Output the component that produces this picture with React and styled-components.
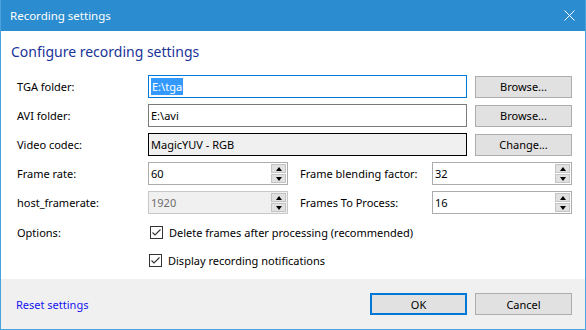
import React from 'react';
import styled, { createGlobalStyle } from 'styled-components';

const Global = createGlobalStyle`
  html, body { margin: 0; padding: 0; background: #fff; }
  body { font-family: "Noto Sans", "Open Sans", sans-serif; font-size: 11px; color: #000; }
`;

const Window = styled.div`
  width: 586px;
  height: 330px;
  box-sizing: border-box;
  border: 1px solid #4aa3df;
  border-top: none;
  display: flex;
  flex-direction: column;
  background: #fff;
`;

const TitleBar = styled.div`
  height: 31px;
  flex: none;
  background: #2b8dcf;
  color: #fff;
  display: flex;
  align-items: center;
  justify-content: space-between;
  padding: 0 10px 0 9px;
  font-size: 11.5px;
`;

const Body = styled.div`
  flex: 1;
  padding: 10px 13px 0 15px;
  display: flex;
  flex-direction: column;
`;

const Heading = styled.div`
  font-size: 14px;
  line-height: 20px;
  color: #1a3399;
  margin: 1px 0 13px -5px;
`;

const Row = styled.div`
  display: flex;
  align-items: center;
  height: 23px;
  margin-bottom: 6px;
  gap: 8px;
`;

const Label = styled.div`
  width: ${p => p.w || 123}px;
  flex: none;
  white-space: nowrap;
  padding-left: ${p => p.pl || 1}px;
`;

const Field = styled.div`
  flex: ${p => (p.w ? 'none' : 1)};
  width: ${p => (p.w ? p.w + 'px' : 'auto')};
  height: 23px;
  box-sizing: border-box;
  border: 1px solid ${p => p.border || '#7a7a7a'};
  background: ${p => p.bg || '#fff'};
  color: ${p => p.color || '#000'};
  display: flex;
  align-items: center;
  padding-left: 2px;
`;

const Selected = styled.span`
  background: #3399ff;
  color: #fff;
  padding: 1px 1px;
`;

const Button = styled.div`
  width: 97px;
  height: 22px;
  box-sizing: border-box;
  flex: none;
  background: #e1e1e1;
  border: ${p => (p.primary ? '2px solid #0078d7' : '1px solid #adadad')};
  display: flex;
  align-items: center;
  justify-content: center;
`;

const SpinField = styled(Field)`
  padding-right: 1px;
  justify-content: space-between;
`;

const Spinner = styled.div`
  display: flex;
  flex-direction: column;
  width: 15px;
  height: 19px;
`;

const SpinBtn = styled.div`
  flex: 1;
  background: #e1e1e1;
  border: 1px solid #c4c4c4;
  box-sizing: border-box;
  display: flex;
  align-items: center;
  justify-content: center;
  & + & { margin-top: 1px; }
`;

const Arrow = styled.div`
  width: 0;
  height: 0;
  border-left: 3.5px solid transparent;
  border-right: 3.5px solid transparent;
  ${p => (p.down ? 'border-top: 4px solid #000;' : 'border-bottom: 4px solid #000;')}
`;

const CheckRow = styled.div`
  display: flex;
  align-items: center;
  height: 16px;
  padding-left: ${p => (p.indent ? 133 : 0)}px;
  gap: 6px;
  margin-top: ${p => p.mt || 0}px;
`;

const Box = styled.div`
  width: 13px;
  height: 13px;
  box-sizing: border-box;
  border: 1px solid #333;
  background: #fff;
  display: flex;
  align-items: center;
  justify-content: center;
`;

const Footer = styled.div`
  height: 50px;
  flex: none;
  background: #f0f0f0;
  display: flex;
  align-items: center;
  padding: 0 13px 0 15px;
  gap: 8px;
`;

const Link = styled.div`
  color: #1414f0;
  flex: 1;
`;

const Spin = ({ value, disabled }) => (
  <SpinField w={140} border={disabled ? '#c8c8c8' : '#acacac'} bg={disabled ? '#f0f0f0' : '#fff'} color={disabled ? '#6d6d6d' : '#000'}>
    <span>{value}</span>
    <Spinner>
      <SpinBtn><Arrow /></SpinBtn>
      <SpinBtn><Arrow down /></SpinBtn>
    </Spinner>
  </SpinField>
);

const Check = () => (
  <Box>
    <svg width="11" height="11" viewBox="0 0 11 11">
      <path d="M1.5 5.5 L4 8 L9.5 2.5" fill="none" stroke="#333" strokeWidth="1.1" />
    </svg>
  </Box>
);

export default function App() {
  return (
    <>
      <Global />
      <Window>
        <TitleBar>
          <span>Recording settings</span>
          <svg width="11" height="11" viewBox="0 0 11 11">
            <path d="M0.5 0.5 L10.5 10.5 M10.5 0.5 L0.5 10.5" stroke="#fff" strokeWidth="1" />
          </svg>
        </TitleBar>
        <Body>
          <Heading>Configure recording settings</Heading>
          <Row>
            <Label>TGA folder:</Label>
            <Field border="#0078d7"><Selected>E:\tga</Selected></Field>
            <Button>Browse...</Button>
          </Row>
          <Row>
            <Label>AVI folder:</Label>
            <Field>E:\avi</Field>
            <Button>Browse...</Button>
          </Row>
          <Row>
            <Label>Video codec:</Label>
            <Field border="#000" bg="#f0f0f0">MagicYUV - RGB</Field>
            <Button>Change...</Button>
          </Row>
          <Row>
            <Label>Frame rate:</Label>
            <Spin value="60" />
            <Label w={124} pl={4}>Frame blending factor:</Label>
            <Spin value="32" />
          </Row>
          <Row>
            <Label>host_framerate:</Label>
            <Spin value="1920" disabled />
            <Label w={124} pl={4}>Frames To Process:</Label>
            <Spin value="16" />
          </Row>
          <CheckRow mt={4}>
            <Label w={127}>Options:</Label>
            <Check />
            <span>Delete frames after processing (recommended)</span>
          </CheckRow>
          <CheckRow indent mt={12}>
            <Check />
            <span>Display recording notifications</span>
          </CheckRow>
        </Body>
        <Footer>
          <Link>Reset settings</Link>
          <Button primary>OK</Button>
          <Button>Cancel</Button>
        </Footer>
      </Window>
    </>
  );
}
